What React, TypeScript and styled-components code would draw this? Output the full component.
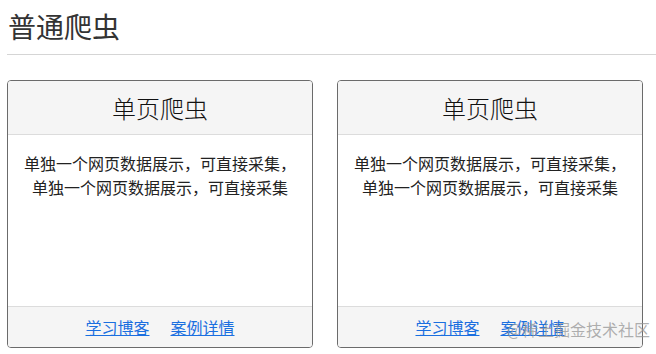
import styled, { createGlobalStyle } from 'styled-components';

const GlobalStyle = createGlobalStyle`
  body {
    margin: 0;
    background: #fff;
    font-family: "Noto Sans CJK SC", "Noto Sans", sans-serif;
    color: #333;
  }
`;

const Page = styled.div`
  position: relative;
  box-sizing: border-box;
  width: 656px;
  height: 354px;
  overflow: hidden;
  padding: 0 0 0 7px;
`;

const Title = styled.h2`
  margin: 0;
  padding: 6px 0 0 1px;
  font-size: 28px;
  font-weight: 400;
  line-height: 40px;
  color: #333;
`;

const Divider = styled.hr`
  margin: 8px 0 25px;
  border: 0;
  border-top: 1px solid #d5d5d5;
`;

const CardGrid = styled.div`
  display: grid;
  grid-template-columns: repeat(2, 306px);
  column-gap: 24px;
`;

const Column = styled.div`
  display: flex;
  flex-direction: column;
`;

const Card = styled.div`
  box-sizing: border-box;
  height: 268px;
  border: 1px solid #6b6b6b;
  border-radius: 4px;
  display: flex;
  flex-direction: column;
  overflow: hidden;
`;

const CardHeader = styled.div`
  height: 52px;
  padding-bottom: 1px;
  background: #f5f5f5;
  border-bottom: 1px solid #dcdcdc;
  display: flex;
  align-items: center;
  justify-content: center;
  font-size: 24px;
  font-weight: 300;
  color: #111;
`;

const CardBody = styled.div`
  flex: 1;
  padding: 16px 0 0;
  text-align: center;
  font-size: 16px;
  line-height: 24px;
  color: #222;
`;

const CardFooter = styled.div`
  height: 40px;
  background: #f5f5f5;
  border-top: 1px solid #dcdcdc;
  display: flex;
  align-items: center;
  justify-content: center;
  gap: 21px;
  font-size: 16px;
`;

const Link = styled.a`
  color: #1a6fe0;
  text-decoration: underline;
  cursor: pointer;
`;

const Note = styled.p`
  margin: 2px 0 0 1px;
  font-size: 16px;
  line-height: 22px;
  color: #222;
`;

const Watermark = styled.div`
  position: absolute;
  right: 6px;
  bottom: 13px;
  font-size: 16px;
  color: rgba(150, 150, 150, 0.75);
  pointer-events: none;
`;

const cards = [
  { title: '单页爬虫', lines: ['单独一个网页数据展示，可直接采集，', '单独一个网页数据展示，可直接采集'] },
  { title: '单页爬虫', lines: ['单独一个网页数据展示，可直接采集，', '单独一个网页数据展示，可直接采集'] },
];

export default function App() {
  return (
    <Page>
      <GlobalStyle />
      <Title>普通爬虫</Title>
      <Divider />
      <CardGrid>
        {cards.map((c, i) => (
          <Column key={i}>
            <Card>
              <CardHeader>{c.title}</CardHeader>
              <CardBody>
                {c.lines.map((l, j) => (
                  <div key={j}>{l}</div>
                ))}
              </CardBody>
              <CardFooter>
                <Link>学习博客</Link>
                <Link>案例详情</Link>
              </CardFooter>
            </Card>
            <Note>本站案例</Note>
          </Column>
        ))}
      </CardGrid>
      <Watermark>@稀土掘金技术社区</Watermark>
    </Page>
  );
}
